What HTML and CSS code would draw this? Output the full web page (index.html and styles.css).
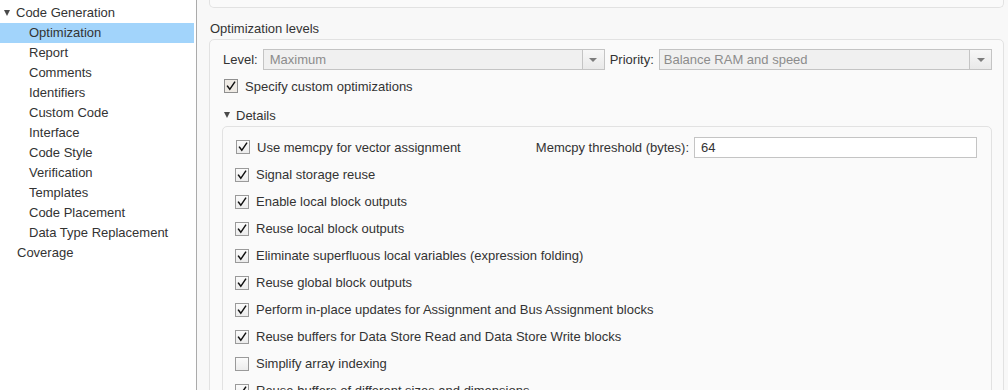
FILE: index.html
```html
<!DOCTYPE html>
<html lang="en">
<head>
<meta charset="utf-8">
<title>Code Generation - Optimization</title>
<link rel="stylesheet" href="styles.css">
</head>
<body>
<div class="app">
  <nav class="tree">
    <div class="node top"><span class="twisty"></span>Code Generation</div>
    <div class="node child selected">Optimization</div>
    <div class="node child">Report</div>
    <div class="node child">Comments</div>
    <div class="node child">Identifiers</div>
    <div class="node child">Custom Code</div>
    <div class="node child">Interface</div>
    <div class="node child">Code Style</div>
    <div class="node child">Verification</div>
    <div class="node child">Templates</div>
    <div class="node child">Code Placement</div>
    <div class="node child">Data Type Replacement</div>
    <div class="node top leaf">Coverage</div>
  </nav>
  <main class="content">
    <div class="prev-panel"></div>
    <div class="group-title">Optimization levels</div>
    <section class="panel">
      <div class="level-row">
        <span class="lbl">Level:</span>
        <div class="combo combo-level"><span class="combo-text">Maximum</span><span class="combo-btn"><span class="arrow"></span></span></div>
        <span class="lbl lbl-priority">Priority:</span>
        <div class="combo combo-priority"><span class="combo-text">Balance RAM and speed</span><span class="combo-btn"><span class="arrow"></span></span></div>
      </div>
      <div class="check-row custom"><span class="cb warm checked"><svg viewBox="0 0 12 12" width="12" height="12"><path d="M2.5 6.2 L4.8 9.3 L9.6 2.2" /></svg></span>Specify custom optimizations</div>
      <div class="details-head"><span class="twisty"></span>Details</div>
      <div class="details">
        <div class="opt first">
          <span class="cb checked"><svg viewBox="0 0 12 12" width="12" height="12"><path d="M2.5 6.2 L4.8 9.3 L9.6 2.2" /></svg></span>
          <span class="opt-text">Use memcpy for vector assignment</span>
          <span class="spacer"></span>
          <span class="lbl">Memcpy threshold (bytes):</span>
          <span class="field">64</span>
        </div>
        <div class="opt"><span class="cb checked"><svg viewBox="0 0 12 12" width="12" height="12"><path d="M2.5 6.2 L4.8 9.3 L9.6 2.2" /></svg></span>Signal storage reuse</div>
        <div class="opt"><span class="cb checked"><svg viewBox="0 0 12 12" width="12" height="12"><path d="M2.5 6.2 L4.8 9.3 L9.6 2.2" /></svg></span>Enable local block outputs</div>
        <div class="opt"><span class="cb checked"><svg viewBox="0 0 12 12" width="12" height="12"><path d="M2.5 6.2 L4.8 9.3 L9.6 2.2" /></svg></span>Reuse local block outputs</div>
        <div class="opt"><span class="cb checked"><svg viewBox="0 0 12 12" width="12" height="12"><path d="M2.5 6.2 L4.8 9.3 L9.6 2.2" /></svg></span>Eliminate superfluous local variables (expression folding)</div>
        <div class="opt"><span class="cb checked"><svg viewBox="0 0 12 12" width="12" height="12"><path d="M2.5 6.2 L4.8 9.3 L9.6 2.2" /></svg></span>Reuse global block outputs</div>
        <div class="opt"><span class="cb checked"><svg viewBox="0 0 12 12" width="12" height="12"><path d="M2.5 6.2 L4.8 9.3 L9.6 2.2" /></svg></span>Perform in-place updates for Assignment and Bus Assignment blocks</div>
        <div class="opt"><span class="cb checked"><svg viewBox="0 0 12 12" width="12" height="12"><path d="M2.5 6.2 L4.8 9.3 L9.6 2.2" /></svg></span>Reuse buffers for Data Store Read and Data Store Write blocks</div>
        <div class="opt"><span class="cb"></span>Simplify array indexing</div>
        <div class="opt"><span class="cb checked"><svg viewBox="0 0 12 12" width="12" height="12"><path d="M2.5 6.2 L4.8 9.3 L9.6 2.2" /></svg></span>Reuse buffers of different sizes and dimensions</div>
      </div>
    </section>
  </main>
</div>
</body>
</html>
```

FILE: styles.css
```css
html, body {
  margin: 0;
  padding: 0;
  height: 390px;
  overflow: hidden;
}
body {
  font-family: "Liberation Sans", Arial, sans-serif;
  font-size: 13px;
  color: #333;
  background: #f8f8f8;
}
.app {
  display: flex;
  height: 390px;
}

/* tree */
.tree {
  width: 194px;
  padding: 3px 2px 0 0;
  background: #fff;
  border-right: 1px solid #ababab;
  flex: none;
}
.node {
  height: 20px;
  line-height: 20px;
  white-space: nowrap;
  display: flex;
  align-items: center;
}
.node.top { padding-left: 4px; }
.node.leaf { padding-left: 17px; }
.node.child { padding-left: 29px; }
.node.selected { background: #a2d4fb; }
.twisty {
  width: 0;
  height: 0;
  border-left: 3.5px solid transparent;
  border-right: 3.5px solid transparent;
  border-top: 6px solid #4a4a4a;
  margin-right: 6px;
  margin-top: -1px;
}

/* content */
.content {
  flex: 1;
  padding: 0 4px 0 12px;
  min-width: 0;
}
.prev-panel {
  height: 7px;
  border: 1px solid #e2e2e2;
  border-top: none;
  border-radius: 0 0 5px 5px;
  background: #fafafa;
}
.group-title {
  margin-top: 12px;
  height: 18px;
  line-height: 18px;
  padding-left: 1px;
}
.panel {
  margin-top: 1px;
  border: 1px solid #e2e2e2;
  border-radius: 5px;
  background: #fafafa;
  padding: 9px 11px 0 12px;
  height: 400px;
}
.level-row {
  display: flex;
  align-items: center;
  height: 21px;
}
.lbl {
  white-space: nowrap;
  padding-left: 1px;
}
.lbl-priority { margin-left: 4px; }
.combo {
  display: flex;
  height: 19px;
  border: 1px solid #c4c4c4;
  background: #f0f0f0;
  margin-left: 5px;
  box-sizing: content-box;
}
.combo-level { width: 340px; }
.combo-priority { flex: 1; margin-left: 5px; }
.combo-text {
  flex: 1;
  color: #8c8c8c;
  line-height: 19px;
  padding-left: 6px;
  white-space: nowrap;
}
.combo-priority .combo-text { padding-left: 4px; }
.combo-btn {
  width: 21px;
  border-left: 1px solid #c4c4c4;
  background: linear-gradient(#f7f7f7, #e9e9e9);
  display: flex;
  align-items: center;
  justify-content: center;
}
.arrow {
  width: 0;
  height: 0;
  border-left: 4px solid transparent;
  border-right: 4px solid transparent;
  border-top: 4px solid #7c7c7c;
}

.check-row {
  display: flex;
  align-items: center;
  height: 20px;
  margin-top: 6px;
  padding-left: 2px;
}
.cb {
  width: 12px;
  height: 12px;
  border: 1px solid #9a9a9a;
  background: linear-gradient(#fbfbfb, #ececec);
  margin-right: 7px;
  display: flex;
  align-items: center;
  justify-content: center;
  flex: none;
}
.cb.warm {
  background: #efebe5;
  border-color: #8f8f8f;
}
.cb svg path {
  fill: none;
  stroke: #111;
  stroke-width: 1.5;
  stroke-linecap: square;
}
.details-head {
  display: flex;
  align-items: center;
  height: 18px;
  margin-top: 10px;
  padding-left: 2px;
}
.details-head .twisty {
  margin-right: 6px;
}
.details {
  margin-top: 2px;
  border: 1px solid #e2e2e2;
  border-radius: 5px;
  background: #fafafa;
  padding: 6px 14px 0 12px;
  height: 400px;
}
.opt {
  display: flex;
  align-items: center;
  height: 27px;
  white-space: nowrap;
}
.opt.first {
  height: 28px;
}
.opt.first .cb { margin-left: 1px; }
.spacer { flex: 1; }
.field {
  width: 275px;
  height: 19px;
  line-height: 19px;
  border: 1px solid #c4c4c4;
  background: #fff;
  margin-left: 5px;
  padding-left: 6px;
  flex: none;
}
```
